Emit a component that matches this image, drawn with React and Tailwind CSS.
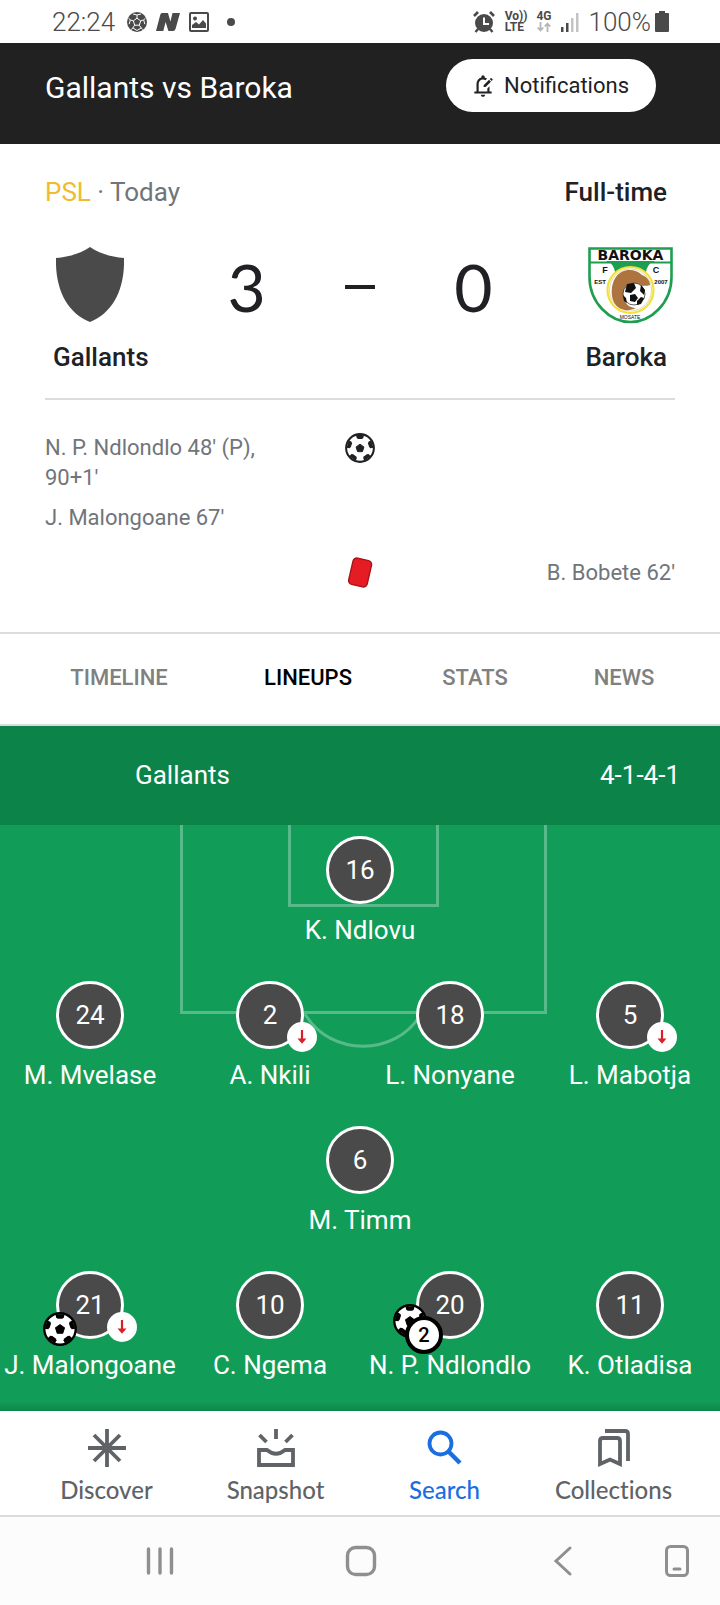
import React, { useState } from 'react';
import { MdOutlineEditNotifications } from 'react-icons/md';

const SPOKES = [0, 72, 144, 216, 288];

const lineup = [
  [{ number: 16, name: 'K. Ndlovu' }],
  [
    { number: 24, name: 'M. Mvelase' },
    { number: 2, name: 'A. Nkili', subbed: true },
    { number: 18, name: 'L. Nonyane' },
    { number: 5, name: 'L. Mabotja', subbed: true }
  ],
  [{ number: 6, name: 'M. Timm' }],
  [
    { number: 21, name: 'J. Malongoane', goals: 1, subbed: true },
    { number: 10, name: 'C. Ngema' },
    { number: 20, name: 'N. P. Ndlondlo', goals: 2 },
    { number: 11, name: 'K. Otladisa' }
  ]
];

const SoccerBall = ({ className, ink = '#202124' }) => (
  <svg viewBox="0 0 32 32" className={className} aria-hidden="true">
    <circle cx="16" cy="16" r="14.5" fill="#fff" />
    <path d="M16 11.9l4.2 3-1.6 5h-5.2l-1.6-5z" fill={ink} stroke={ink} strokeLinejoin="round" />
    {SPOKES.map((angle) => (
      <path key={angle} d="M11.800 2.2h8.400l-.6 3.200-1.600 1h-4l-1.600-1z" fill={ink} transform={`rotate(${angle} 16 16)`} />
    ))}
    <circle cx="16" cy="16" r="14.800" fill="none" stroke={ink} strokeWidth="2.200" />
  </svg>
);

const SubbedOff = ({ className }) => (
  <svg viewBox="0 0 30 30" className={className} aria-label="Substituted">
    <circle cx="15" cy="15" r="15" fill="#fff" />
    <path d="M15 8v10" fill="none" stroke="#d91f2a" strokeWidth="2.200" />
    <path d="M10.500 16.500h9L15 21.800z" fill="#d91f2a" />
  </svg>
);

const StatusBar = () => (
  <div className="flex h-[43px] items-center justify-between bg-white pr-[51px] pl-[52px] text-[26px] leading-8 font-light text-[#4a4a4a]">
    <div className="flex items-center">
      <span>22:24</span>
      <svg viewBox="0 0 20 20" className="ml-3 size-5" aria-hidden="true">
        <circle cx="10" cy="10" r="10" fill="#4a4a4a" />
        <g fill="#4a4a4a" stroke="#fff" strokeWidth="1">
          <path d="M10 6.2l3.7 2.7-1.4 4.3H7.7L6.3 8.9z" />
          <path d="M10 6.2V3M13.7 8.9l3-1M12.3 13.2l1.9 2.7M7.7 13.2l-1.9 2.7M6.3 8.9l-3-1M6 2l4 1 4-1M18.6 6l-1.9 1.9 1.1 4.2M15.7 17.6l-1.5-1.7-4.2 2.6-4.2-2.6-1.5 1.7M2.2 12.1l1.1-4.2L1.4 6" fill="none" />
        </g>
      </svg>
      <svg viewBox="0 0 24 20" className="ml-[9px] h-5 w-6" aria-hidden="true">
        <path d="M6 1h6l2.4 8.5L16.5 1H24l-4.4 15.8Q19 19 17 19h-4.6L9.6 10 7.3 19H0L4.2 3Q4.700 1 6 1z" fill="#4a4a4a" />
      </svg>
      <svg viewBox="0 0 20 20" className="ml-[9px] size-5" aria-hidden="true">
        <rect x="1" y="1" width="18" height="18" rx="1" fill="none" stroke="#4a4a4a" strokeWidth="2" />
        <circle cx="6" cy="6.500" r="2" fill="#4a4a4a" />
        <path d="M3 16v-3l4-3 3 2.500 4-4.500 3 3.500V16z" fill="#4a4a4a" />
      </svg>
      <span className="ml-[18px] size-2 rounded-full bg-[#4a4a4a]" />
    </div>
    <div className="flex items-center">
      <svg viewBox="0 0 22 22" className="size-[22px]" aria-hidden="true">
        <circle cx="11" cy="12" r="9" fill="#4a4a4a" />
        <path d="M1 5l4-4M21 5l-4-4" stroke="#4a4a4a" strokeWidth="2.600" />
        <path d="M5 18l-2.500 3M17 18l2.500 3" stroke="#4a4a4a" strokeWidth="2.400" />
        <path d="M11 6.500V13h5" fill="none" stroke="#fff" strokeWidth="2" />
      </svg>
      <div className="ml-[10px] text-[12px] leading-[11px] font-bold">
        <div>Vo))</div>
        <div>LTE</div>
      </div>
      <div className="ml-[9px] flex flex-col items-center text-[12px] leading-[11px] font-bold">
        <span>4G</span>
        <svg viewBox="0 0 14 10" className="h-[10px] w-[14px]" fill="none" stroke="#b5b5b5" strokeWidth="1.800" aria-hidden="true">
          <path d="M3.500 0v8M.7 5.500l2.800 3 2.800-3M10.500 10V2M7.700 4.500l2.800-3 2.800 3" />
        </svg>
      </div>
      <svg viewBox="0 0 18 20" className="ml-[9px] h-5 w-[18px]" aria-hidden="true">
        <path d="M0 15h2.500v5H0zM5 11h2.500v9H5z" fill="#4a4a4a" />
        <path d="M10 6h2.500v14H10zM15 1h2.500v19H15z" fill="#c4c4c4" />
      </svg>
      <span className="ml-[10px]">100%</span>
      <svg viewBox="0 0 14 22" className="ml-1 h-[22px] w-[14px]" aria-hidden="true">
        <path d="M4 0h6v2h3q1 0 1 1v17q0 1-1 1H1q-1 0-1-1V3q0-1 1-1h3z" fill="#4a4a4a" />
      </svg>
    </div>
  </div>
);

const GallantsCrest = () => (
  <svg viewBox="0 0 68 76" className="h-[76px] w-[68px]" role="img" aria-label="Gallants">
    <path d="M34 0C42 6 55 10 68 11C69 42 57 66 34 75C11 66-1 42 0 11C13 10 26 6 34 0z" fill="#4a4a4a" />
  </svg>
);

const BarokaCrest = () => (
  <svg viewBox="0 0 85 77" className="h-[77px] w-[85px]" role="img" aria-label="Baroka">
    <path d="M1.500 1.500h82V30C83.500 56 63 75 42.500 75S1.500 56 1.500 30z" fill="#fff" stroke="#1d9e50" strokeWidth="2.600" />
    <path d="M2 15.500h81M22 15h41q-5 3-6 10H28q-1-7-6-10z" fill="#1d9e50" stroke="#1d9e50" strokeWidth="2" />
    <circle cx="42.500" cy="43" r="23" fill="#fff" stroke="#f3e03a" strokeWidth="2.200" />
    <circle cx="42.500" cy="43" r="21" fill="none" stroke="#ddd8b0" strokeWidth="1" />
    <path d="M30 60C22 54 22 38 28 30C34 21 47 21 54 28C60 30 62 35 62 38C57 40 50 38 45 37C36 38 34 47 37 54C39 59 44 61 48 61C42 64 35 64 30 60z" fill="#ad7440" />
    <circle cx="46" cy="47" r="11" fill="#fff" stroke="#333" strokeWidth=".8" />
    <path d="M39 37l7-1 2 5-5 5-6-1zM53 38l4 5-1 5-4-4zM42 48l5-1 3 4-3 4-5-1zM53 50l3 1-3 6-4 1v-4zM35 48l3 3 1 5-3-2z" fill="#111" />
    <g fill="#111" textAnchor="middle" fontFamily="'DejaVu Sans', sans-serif" fontWeight="700">
      <text x="42.500" y="13" fontSize="14">BAROKA</text>
      <g fontFamily="'Liberation Sans', sans-serif">
        <text x="17" y="26" fontSize="9">F</text>
        <text x="68" y="26" fontSize="9">C</text>
        <text x="12" y="37" fontSize="6">EST</text>
        <text x="73" y="37" fontSize="6">2007</text>
      </g>
      <text x="42" y="72" fontSize="5" fontWeight="400" fontFamily="'Liberation Sans', sans-serif">MOSATE</text>
    </g>
  </svg>
);

const PitchLines = () => (
  <svg viewBox="0 0 376 224" className="absolute top-0 left-1/2 h-56 w-[376px] -translate-x-1/2" fill="none" stroke="#fff" strokeOpacity=".3" strokeWidth="3" aria-hidden="true">
    <path d="M9.500 0v187.500h364V0M117.500 0v80.500h148V0M133 189C158 232 224 232 249 189" />
  </svg>
);

const Player = ({ number, name, goals, subbed }) => (
  <div className="flex w-1/4 flex-col items-center">
    <div className="relative flex size-[68px] items-center justify-center rounded-full border-[3px] border-white bg-[#4a4a4a] text-[26px] leading-8">
      {number}
      {goals === 1 && <SoccerBall ink="#000" className="absolute top-[38px] -left-4 size-[34px]" />}
      {goals > 1 && (
        <>
          <SoccerBall ink="#000" className="absolute top-[30px] -left-[26px] size-[34px]" />
          <span className="absolute top-[42px] -left-[14px] flex size-[38px] items-center justify-center rounded-full border-4 border-black bg-white text-[20px] font-medium text-black">
            {goals}
          </span>
        </>
      )}
      {subbed && <SubbedOff className="absolute top-[38px] left-12 size-[30px]" />}
    </div>
    <span className="mt-[10px] text-[26px] leading-8 whitespace-nowrap">{name}</span>
  </div>
);

const tabs = ['TIMELINE', 'LINEUPS', 'STATS', 'NEWS'];

const navItems = [
  {
    label: 'Discover',
    icon: <path d="M20 1v38M1 20h38M7 7l26 26M33 7L7 33" />
  },
  {
    label: 'Snapshot',
    icon: (
      <>
        <path d="M20 1v10M3.500 7l7 7M36.500 7l-7 7" />
        <path d="M3 22h8Q20 29.500 29 22h8v15H3z" />
      </>
    )
  },
  {
    label: 'Search',
    icon: (
      <>
        <circle cx="15.500" cy="15.500" r="11" />
        <path d="M23.500 23.500L35 35" strokeWidth="4.400" />
      </>
    )
  },
  {
    label: 'Collections',
    icon: (
      <>
        <path d="M6 36V13q0-3 3-3h14q3 0 3 3v23l-10-4.500z" />
        <path d="M11 3h20q3 0 3 3v27" />
      </>
    )
  }
];

export default function App() {
  const [tab, setTab] = useState('LINEUPS');
  const [section, setSection] = useState('Search');

  return (
    <div className="min-h-screen bg-white font-['Roboto',sans-serif] text-[#202124]">
      <StatusBar />

      {/* Match header */}
      <header className="flex items-start justify-between bg-[#212121] pt-4 pr-16 pb-8 pl-[45px]">
        <h1 className="pt-2 text-[30px] leading-[42px] text-white">Gallants vs Baroka</h1>
        <button className="flex h-[53px] items-center rounded-full bg-white pr-[27px] pl-6 text-[22px]">
          <MdOutlineEditNotifications className="mr-2 size-[26px]" />
          Notifications
        </button>
      </header>

      {/* Score */}
      <section className="px-[45px] pt-8">
        <div className="flex justify-between pr-2 text-[26px] leading-8">
          <p className="text-[#70757a]">
            <span className="text-[#f0bb2c]">PSL</span> · Today
          </p>
          <p className="font-medium">Full-time</p>
        </div>

        <div className="mt-[37px] flex h-20 items-center justify-between">
          <div className="flex w-[90px] justify-center"><GallantsCrest /></div>
          <div className="grid flex-1 grid-cols-3 items-center px-[55px] pt-1 text-center font-['Lato',sans-serif] text-[66px] leading-20">
            <span>3</span>
            <span className="mx-auto h-1 w-[30px] bg-[#202124]" />
            <span>0</span>
          </div>
          <div className="flex w-[90px] justify-center"><BarokaCrest /></div>
        </div>

        <div className="mt-4 flex justify-between border-b-2 border-[#dadce0] px-2 pb-[25px] text-[26px] leading-8 font-medium">
          <p>Gallants</p>
          <p>Baroka</p>
        </div>
      </section>

      {/* Goals and cards */}
      <section className="px-[45px] pt-[33px] pb-[43px] text-[22px] leading-[30px] text-[#70757a]">
        <div className="grid grid-cols-[1fr_30px_1fr]">
          <div className="max-w-[240px]">
            <p>N. P. Ndlondlo 48' (P), 90+1'</p>
            <p className="mt-[10px]">J. Malongoane 67'</p>
          </div>
          <SoccerBall className="size-[30px]" />
        </div>
        <div className="mt-6 grid grid-cols-[1fr_32px_1fr] items-center">
          <span />
          <svg viewBox="0 0 32 32" className="size-8" role="img" aria-label="Red card">
            <rect x="6.500" y="2" width="19" height="27" rx="4" fill="#e51c23" stroke="#a8141a" strokeWidth="1.400" transform="rotate(13 16 16)" />
          </svg>
          <p className="text-right">B. Bobete 62'</p>
        </div>
      </section>

      {/* Tabs */}
      <nav role="tablist" className="grid grid-cols-[190fr_188fr_146fr_152fr] border-y-2 border-[#dadce0] pr-5 pl-6">
        {tabs.map((name) => (
          <button
            key={name}
            role="tab"
            aria-selected={tab === name}
            onClick={() => setTab(name)}
            className={`h-[90px] pb-[3px] text-[22px] font-medium ${tab === name ? 'text-black' : 'text-[#808080]'}`}
          >
            {name}
          </button>
        ))}
      </nav>

      {/* Lineup */}
      <section className="text-white">
        <div className="flex h-[99px] items-center justify-between bg-[#0c8449] pr-10 pl-[135px] text-[26px]">
          <h2>Gallants</h2>
          <span>4-1-4-1</span>
        </div>
        <div className="relative bg-[#119d58] pt-[11px]">
          <PitchLines />
          {lineup.map((row, i) => (
            <div key={i} className={`relative flex justify-center ${i === lineup.length - 1 ? 'h-[140px]' : 'h-[145px]'}`}>
              {row.map((player) => (
                <Player key={player.number} {...player} />
              ))}
            </div>
          ))}
          <div className="absolute inset-x-0 bottom-0 h-[10px] bg-linear-to-b from-transparent to-black/15" />
        </div>
      </section>

      {/* App navigation */}
      <nav className="grid grid-cols-4 border-b-2 border-[#dcdcdc] px-[22px]">
        {navItems.map(({ label, icon }) => (
          <button
            key={label}
            onClick={() => setSection(label)}
            className={`flex h-[104px] flex-col items-center pt-[17px] font-['Lato',sans-serif] text-[24px] leading-[30px] font-medium [font-variant-ligatures:none] ${
              section === label ? 'text-[#1a6fe0]' : 'text-[#5f6368]'
            }`}
          >
            <svg viewBox="0 0 40 40" className="mb-[7px] size-10" fill="none" stroke="currentColor" strokeWidth="3.800" aria-hidden="true">
              {icon}
            </svg>
            {label}
          </button>
        ))}
      </nav>

      {/* System buttons */}
      <nav className="grid h-[88px] grid-cols-[200fr_202fr_202fr_26fr] items-center bg-[#fcfcfc] pr-[30px] pl-[60px] text-[#8f8f8f]">
        <button aria-label="Recent apps" className="flex justify-center">
          <svg viewBox="0 0 32 32" className="size-8" fill="none" stroke="currentColor" strokeWidth="3.400" strokeLinecap="round">
            <path d="M4.500 4v24M16 4v24M27.500 4v24" />
          </svg>
        </button>
        <button aria-label="Home" className="flex justify-center">
          <svg viewBox="0 0 32 32" className="size-8" fill="none" stroke="currentColor" strokeWidth="3.400">
            <rect x="2.500" y="2.500" width="27" height="27" rx="8" />
          </svg>
        </button>
        <button aria-label="Back" className="flex justify-center">
          <svg viewBox="0 0 32 32" className="size-8" fill="none" stroke="currentColor" strokeWidth="3" strokeLinecap="round">
            <path d="M23 3L9 16l14 13" />
          </svg>
        </button>
        <button aria-label="Hide keyboard bar" className="flex justify-center">
          <svg viewBox="0 0 24 32" className="h-8 w-6" fill="none" stroke="currentColor" strokeWidth="3">
            <rect x="1.500" y="1.500" width="21" height="29" rx="4" />
            <path d="M9 24h6" strokeLinecap="round" />
          </svg>
        </button>
      </nav>
    </div>
  );
}
